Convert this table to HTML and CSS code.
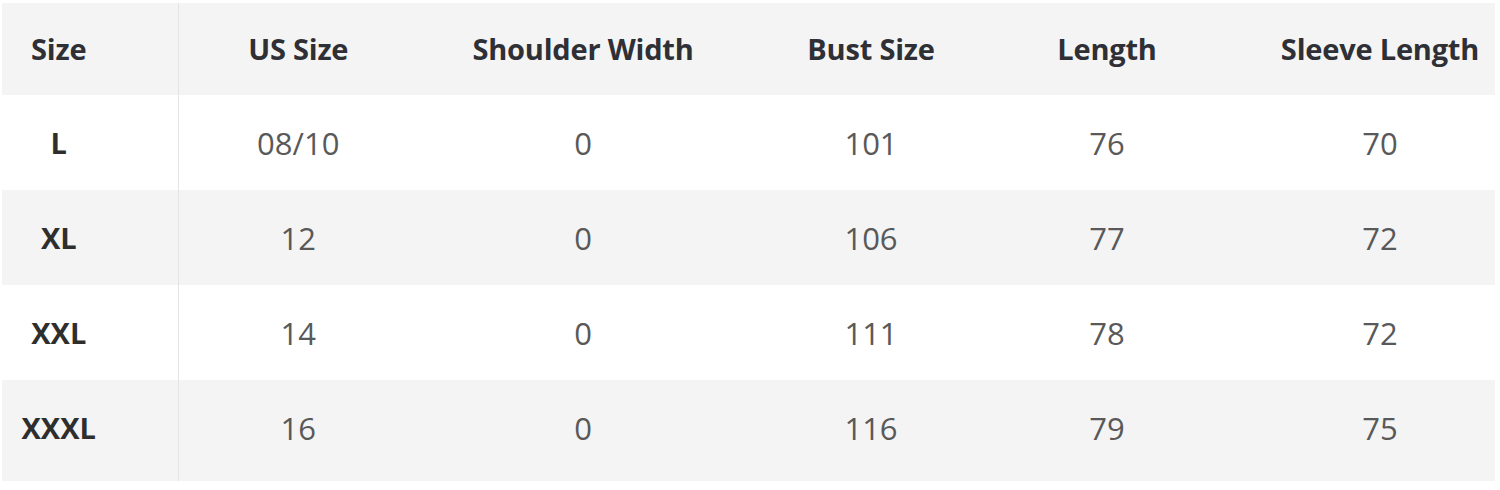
FILE: index.html
```html
<!DOCTYPE html>
<html lang="en">
<head>
<meta charset="utf-8">
<title>Size Chart</title>
<link rel="stylesheet" href="styles.css">
</head>
<body>
<div class="wrap">
<table class="chart">
  <colgroup>
    <col class="c1"><col class="c2"><col class="c3"><col class="c4"><col class="c5"><col class="c6">
  </colgroup>
  <thead>
    <tr>
      <th class="first">Size</th>
      <th>US Size</th>
      <th>Shoulder Width</th>
      <th>Bust Size</th>
      <th>Length</th>
      <th class="last">Sleeve Length</th>
    </tr>
  </thead>
  <tbody>
    <tr><td class="first">L</td><td>08/10</td><td>0</td><td>101</td><td>76</td><td class="last">70</td></tr>
    <tr class="alt"><td class="first">XL</td><td>12</td><td>0</td><td>106</td><td>77</td><td class="last">72</td></tr>
    <tr><td class="first">XXL</td><td>14</td><td>0</td><td>111</td><td>78</td><td class="last">72</td></tr>
    <tr class="alt"><td class="first">XXXL</td><td>16</td><td>0</td><td>116</td><td>79</td><td class="last">75</td></tr>
  </tbody>
</table>
</div>
</body>
</html>
```

FILE: styles.css
```css
html, body {
  margin: 0;
  padding: 0;
  background: #ffffff;
}

.wrap {
  padding: 3px 5px 0 2px;
}

.chart {
  width: 1493px;
  border-collapse: collapse;
  table-layout: fixed;
  font-family: "Open Sans", "Noto Sans", sans-serif;
}

.c1 { width: 176px; }
.c2 { width: 240px; }
.c3 { width: 330px; }
.c4 { width: 246px; }
.c5 { width: 226px; }
.c6 { width: 275px; }

.chart th,
.chart td {
  padding: 0;
  text-align: center;
  vertical-align: middle;
}

.chart thead tr {
  background: #f4f4f4;
  height: 92px;
}

.chart th {
  font-weight: 700;
  font-size: 29px;
  color: #2e3036;
  letter-spacing: -0.2px;
  padding-bottom: 2px;
}

.chart tbody tr {
  height: 95px;
  background: #ffffff;
}

.chart tbody tr.alt {
  background: #f4f4f4;
}

.chart tbody tr:last-child {
  height: 101px;
}

.chart tbody tr:last-child td {
  padding-bottom: 6px;
}

.chart td {
  font-size: 31px;
  font-weight: 400;
  color: #595959;
}

.chart .first {
  padding-right: 62px;
  border-right: 1px solid #e4e4e4;
}

.chart td.first {
  font-weight: 700;
  font-size: 29px;
  color: #2e2e2e;
}

.chart .last {
  padding-left: 45px;
}
```
